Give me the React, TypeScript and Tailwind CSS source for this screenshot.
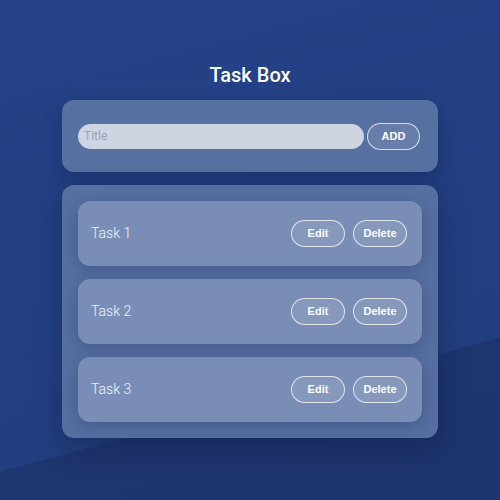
import React from 'react';

const tasks = ['Task 1', 'Task 2', 'Task 3'];

function PillButton({ label }: { label: string }) {
  return (
    <button className="w-[54px] h-[27px] rounded-full border border-white/75 bg-white/10 text-white text-[11px] font-bold font-['Liberation_Sans',Arial,sans-serif]">
      {label}
    </button>
  );
}

export default function App() {
  return (
    <div className="w-full h-[500px] flex flex-col items-center bg-[linear-gradient(165deg,#25428a_0%,#233e7e_74.4%,#1f3570_74.4%,#1e346d_100%)] font-['Roboto',sans-serif]">
      {/* Header */}
      <h1 className="pt-[62px] h-[88px] leading-[26px] text-white text-[20px] font-medium">Task Box</h1>

      {/* New task form */}
      <div className="mt-3 w-[376px] h-[72px] rounded-[12px] bg-[#5670a1] shadow-[0_6px_20px_rgba(10,20,50,0.3)] flex items-center pl-4 pr-[18px] gap-[3px]">
        <input
          placeholder="Title"
          className="flex-1 h-[25px] rounded-full bg-[#cdd5e3] px-[6px] text-[12px] text-gray-700 placeholder:text-[#9aa3b3] outline-none"
        />
        <button className="w-[53px] h-[27px] rounded-full border border-white/75 bg-white/10 text-white text-[11px] font-bold font-['Liberation_Sans',Arial,sans-serif]">
          ADD
        </button>
      </div>

      {/* Task list */}
      <div className="mt-[13px] w-[376px] rounded-[12px] bg-[#566fa0] shadow-[0_8px_28px_rgba(10,20,50,0.35)] p-4 flex flex-col gap-[13px]">
        {tasks.map((t) => (
          <div
            key={t}
            className="h-[65px] rounded-[12px] bg-[#7a8db6] shadow-[0_4px_14px_rgba(20,30,70,0.25)] flex items-center pl-[13px] pr-[15px]"
          >
            <span className="flex-1 text-[14px] font-light text-white/90">{t}</span>
            <div className="flex gap-2">
              <PillButton label="Edit" />
              <PillButton label="Delete" />
            </div>
          </div>
        ))}
      </div>
    </div>
  );
}
